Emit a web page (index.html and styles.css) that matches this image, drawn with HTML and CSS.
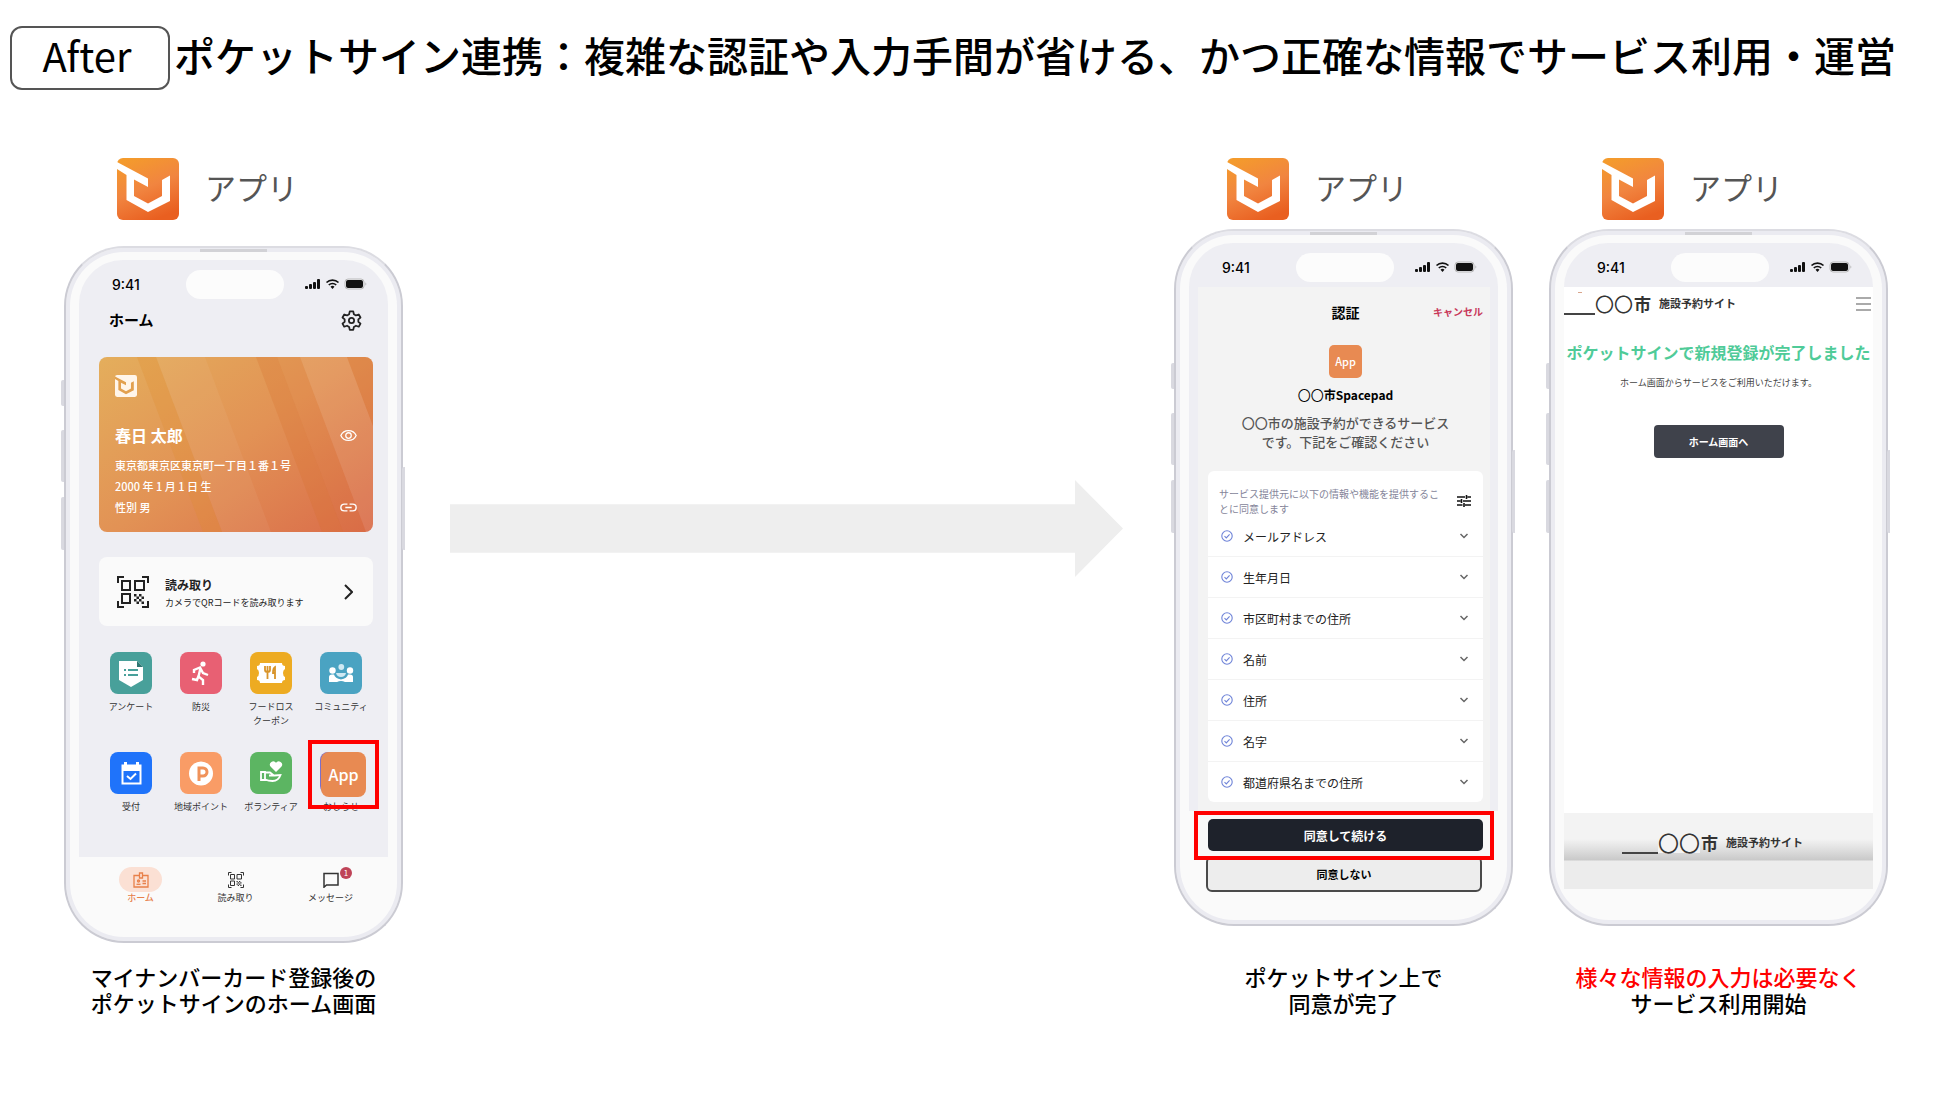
FILE: index.html
```html
<!DOCTYPE html>
<html lang="ja">
<head>
  <meta charset="UTF-8">
  <meta name="viewport" content="width=device-width, initial-scale=1.0">
  <title>ポケットサイン連携 After</title>
  <link rel="stylesheet" href="styles.css">
</head>
<body>
  <!-- shared icons -->
  <svg class="defs" aria-hidden="true">
    <defs>
      <linearGradient id="logoFill" x1="0.2" y1="0" x2="0.6" y2="1">
        <stop offset="0" stop-color="#f49b2c"/>
        <stop offset="0.5" stop-color="#f18540"/>
        <stop offset="1" stop-color="#e95f20"/>
      </linearGradient>
    </defs>
    <symbol id="mark" viewBox="0 0 62 62">
      <path d="M0 4L31 20.5V29L17 21.5V38L31 45.5L45 38V22L53 17.5V43L31 54L9.5 42V17L0 11Z"/>
    </symbol>
    <symbol id="signal" viewBox="0 0 62 12">
      <g fill="#111">
        <rect x="0" y="8" width="3" height="3" rx="1"/>
        <rect x="4" y="6" width="3" height="5" rx="1"/>
        <rect x="8" y="4" width="3" height="7" rx="1"/>
        <rect x="12" y="1" width="3" height="10" rx="1"/>
        <rect x="41" y="2" width="17" height="8" rx="2"/>
        <path d="M60.500 4.500v3c1-.5 1-2.500 0-3z" fill="#aaa"/>
        <path d="M27.500 11l-2-2.300a3 3 0 0 1 4 0z"/>
      </g>
      <rect x="40" y="1" width="19" height="10" rx="3" fill="none" stroke="#bbb"/>
      <path d="M21.500 4.500a8.600 8.600 0 0 1 12 0M23.800 7a5.300 5.300 0 0 1 7.400 0" fill="none" stroke="#111" stroke-width="1.700"/>
    </symbol>
    <symbol id="qr" viewBox="0 0 32 32">
      <g fill="none" stroke="currentColor" stroke-width="2">
        <path d="M1 7V1h6M25 1h6v6M31 25v6h-6M7 31H1v-6"/>
        <path d="M5 5h8v9H5zM18 5h9v9h-9zM5 18h8v9H5z"/>
      </g>
      <path fill="currentColor" d="M17 18h2.500v2.500H17zM22 18h2.500v2.500H22zM19.500 20.500H22V23h-2.500zM24.500 20.500H27V23h-2.500zM17 23h2.500v2.500H17zM22 23h2.500v2.500H22zM19.500 25.500H22V28h-2.500zM24.500 25.500H27V28h-2.500z"/>
    </symbol>
    <symbol id="check" viewBox="0 0 12 12">
      <g fill="none" stroke="#6f84d8" stroke-width="1.100">
        <circle cx="6" cy="6" r="5.200"/>
        <path d="M3.500 6.200l1.800 1.700 3.300-3.500"/>
      </g>
    </symbol>
    <symbol id="down" viewBox="0 0 10 6">
      <path d="M1.500 1L5 4.500 8.500 1" fill="none" stroke="#666" stroke-width="1.500"/>
    </symbol>
  </svg>

  <header class="title-bar">
    <span class="badge-after">After</span>
    <h1>ポケットサイン連携：複雑な認証や入力手間が省ける、かつ正確な情報でサービス利用・運営</h1>
  </header>

  <main class="flow">
    <!-- 1: home -->
    <section class="step step-home">
      <div class="app-head">
        <svg class="logo" viewBox="0 0 62 62"><rect width="62" height="62" rx="6" fill="url(#logoFill)"/><use href="#mark" fill="#fff"/></svg>
        <span>アプリ</span>
      </div>
      <div class="phone">
        <i class="side side-a"></i><i class="side side-b"></i><i class="side side-c"></i><i class="side side-r"></i>
        <div class="screen">
          <div class="status"><span>9:41</span><i class="island"></i><svg class="signal"><use href="#signal"/></svg></div>
          <div class="home">
            <div class="home-head">
              <h2>ホーム</h2>
              <svg class="gear" viewBox="0 0 24 24" fill="none" stroke="#222" stroke-width="2" stroke-linejoin="round">
                <path d="M10 1.500h4l.7 3.300 2.400 1.400 3.200-1.100 2 3.500-2.500 2.200v2.600l2.500 2.200-2 3.500-3.200-1.100-2.400 1.400-.7 3.300h-4l-.7-3.300-2.400-1.400-3.200 1.100-2-3.500 2.500-2.200v-2.600L1.700 8.600l2-3.500 3.200 1.100 2.400-1.400z"/>
                <circle cx="12" cy="12" r="3"/>
              </svg>
            </div>
            <div class="id-card">
              <svg class="stripes" viewBox="0 0 274 175" preserveAspectRatio="none">
                <path d="M38 0h19l66 175h-19z" fill="#e08a2c" opacity=".25"/>
                <path d="M57 0h49l66 175h-49z" fill="#fff" opacity=".05"/>
                <path d="M157 0h21l66 175h-21z" fill="#d8702c" opacity=".25"/>
                <path d="M178 0h23l66 175h-23z" fill="#d8702c" opacity=".1"/>
                <path d="M201 0h47l66 175h-47z" fill="#fff" opacity=".08"/>
                <path d="M248 0h26v69z" fill="#d8702c" opacity=".25"/>
              </svg>
              <svg class="card-logo" viewBox="0 0 62 62"><rect width="62" height="62" rx="6" fill="#fff5ea"/><use href="#mark" fill="#e2a04f"/></svg>
              <div class="card-row card-name">
                <strong>春日 太郎</strong>
                <svg class="card-icon" viewBox="0 0 16 12" fill="none" stroke="#fff" stroke-width="1.200"><path d="M.8 6C3.500-.2 12.500-.2 15.200 6 12.500 12.200 3.500 12.200.8 6z"/><circle cx="8" cy="6" r="2.600"/></svg>
              </div>
              <p>東京都東京区東京町一丁目１番１号</p>
              <p>2000 年 1 月 1 日 生</p>
              <div class="card-row">
                <p>性別 男</p>
                <svg class="card-icon" viewBox="0 0 16 12" fill="none" stroke="#fff" stroke-width="1.300"><path d="M7 2.800H4a3.200 3.200 0 0 0 0 6.400h3M9 2.800h3a3.200 3.200 0 0 1 0 6.400H9M5 6h6"/></svg>
              </div>
            </div>
            <button class="scan">
              <svg class="scan-qr"><use href="#qr"/></svg>
              <span class="scan-text"><b>読み取り</b><small>カメラでQRコードを読み取ります</small></span>
              <svg class="scan-next" viewBox="0 0 9 16"><path d="M1 1l7 7-7 7" fill="none" stroke="#222" stroke-width="2"/></svg>
            </button>
            <ul class="apps">
              <li><a href="#">
                <svg class="app-icon teal" viewBox="0 0 42 42"><path fill="#fff" d="M9 9h18l6 6v13l-12 7-12-7z"/><path fill="#2c7672" d="M27 9v6h6z"/><path stroke="#48a09a" stroke-width="2" d="M14 18h2M18 18h10M14 23h2M18 23h10"/></svg>
                <span>アンケート</span></a></li>
              <li><a href="#">
                <svg class="app-icon pink" viewBox="0 0 42 42"><circle cx="23" cy="12" r="2.600" fill="#fff"/><path d="M14 21v-3l6-2.500 3 5.500 5 2M20.500 16l-2 8.500 4.500 3.500v5M18.500 24l-1.500 4-5-1" fill="none" stroke="#fff" stroke-width="2.400"/></svg>
                <span>防災</span></a></li>
              <li><a href="#">
                <svg class="app-icon yellow" viewBox="0 0 42 42"><path fill="#fff" d="M10 11h22q0 3 3 3v3q-2 1-2 4t2 4v3q-3 0-3 3H10q0-3-3-3v-3q2-1 2-4t-2-4v-3q3 0 3-3z"/><path d="M15 14v4q0 2 2.500 2T20 18v-4M17.500 14v13M25 27V15q-2 1-2 6h2" fill="none" stroke="#d8942a" stroke-width="1.800"/></svg>
                <span>フードロス<br>クーポン</span></a></li>
              <li><a href="#">
                <svg class="app-icon blue" viewBox="0 0 42 42"><g fill="#fff"><circle cx="12.500" cy="18.500" r="3.200"/><circle cx="30" cy="18.500" r="3.200"/><path d="M9 30v-5q0-2.500 3-2.500h2q1 4 7 5 6-1 7-5h2q3 0 3 2.500v5h-8q-4-2-8 0z"/></g><g fill="#cfe9f3"><circle cx="21.300" cy="15" r="2.900"/><path d="M16 21h10q-1 4-5 4t-5-4z"/></g></svg>
                <span>コミュニティ</span></a></li>
              <li><a href="#">
                <svg class="app-icon royal" viewBox="0 0 42 42"><path d="M12.500 13.500h18v18h-18z" fill="none" stroke="#fff" stroke-width="2"/><path fill="#fff" d="M12 13h19v6H12zM14 10h3v4h-3zM26 10h3v4h-3z"/><path d="M17 24l3.500 3 5.500-5.500" fill="none" stroke="#fff" stroke-width="2"/></svg>
                <span>受付</span></a></li>
              <li><a href="#">
                <svg class="app-icon peach" viewBox="0 0 42 42"><circle cx="21" cy="21.500" r="12" fill="#fff"/><path d="M19 29V16h4a3.500 3.500 0 0 1 0 8h-4" fill="none" stroke="#f0925a" stroke-width="3"/></svg>
                <span>地域ポイント</span></a></li>
              <li><a href="#">
                <svg class="app-icon green" viewBox="0 0 42 42"><path fill="#fff" d="M26 20l-5.500-5.500a3.300 3.300 0 0 1 5.500-3.700 3.300 3.300 0 0 1 5.500 3.700z"/><path d="M11 20h4v8h-4zM15 20.500h5l4 3h-5 5.500l6-.5q-2 6-8 6-4 0-7.500-1.500" fill="none" stroke="#fff" stroke-width="1.800"/></svg>
                <span>ボランティア</span></a></li>
              <li><a href="#">
                <i class="app-icon oshirase"></i>
                <span>おしらせ</span></a>
                <b class="app-tile app-over">App</b>
                <i class="focus-app"></i></li>
            </ul>
          </div>
          <nav class="tabs">
            <a href="#" class="active">
              <span class="tab-icon"><svg viewBox="0 0 16 16" fill="none" stroke="currentColor" stroke-width="1.300"><path d="M6 3.500H1v11.500h14V3.500h-5M6.500 1h3v5h-3zM9.500 9h3.500M9.500 11.500h3.500"/><circle cx="5.500" cy="9" r="1"/><path d="M3.500 12.300h4"/></svg></span>
              ホーム
            </a>
            <a href="#">
              <span class="tab-icon"><svg><use href="#qr"/></svg></span>
              読み取り
            </a>
            <a href="#">
              <span class="tab-icon"><svg viewBox="0 0 16 16" fill="none" stroke="currentColor" stroke-width="1.500"><path d="M1 1.500h14v11.500H3.500L1 15.200z"/></svg><em>1</em></span>
              メッセージ
            </a>
          </nav>
        </div>
      </div>
      <p class="caption">マイナンバーカード登録後の<br>ポケットサインのホーム画面</p>
    </section>

    <div class="arrow"></div>

    <!-- 2: consent -->
    <section class="step">
      <div class="app-head">
        <svg class="logo" viewBox="0 0 62 62"><rect width="62" height="62" rx="6" fill="url(#logoFill)"/><use href="#mark" fill="#fff"/></svg>
        <span>アプリ</span>
      </div>
      <div class="phone">
        <i class="side side-a"></i><i class="side side-b"></i><i class="side side-c"></i><i class="side side-r"></i>
        <div class="screen">
          <div class="status"><span>9:41</span><i class="island"></i><svg class="signal"><use href="#signal"/></svg></div>
          <div class="consent">
            <div class="consent-head">
              <h2>認証</h2>
              <a href="#">キャンセル</a>
            </div>
            <b class="app-tile app-small">App</b>
            <h3><span>〇〇</span>市Spacepad</h3>
            <p class="desc">〇〇市の施設予約ができるサービス<br>です。下記をご確認ください</p>
            <div class="scope">
              <div class="scope-head">
                <p>サービス提供元に以下の情報や機能を提供するこ<wbr>とに同意します</p>
                <svg class="tune" viewBox="0 0 14 12" stroke="#111" stroke-width="1.600"><path d="M0 2h8M10.500 2H14M9.500 0v4M0 6h3.500M6 6h8M4.500 4v4M0 10h5.500M8 10h6M7 8v4"/></svg>
              </div>
              <ul>
                <li><button><svg class="ok"><use href="#check"/></svg>メールアドレス<svg class="more"><use href="#down"/></svg></button></li>
                <li><button><svg class="ok"><use href="#check"/></svg>生年月日<svg class="more"><use href="#down"/></svg></button></li>
                <li><button><svg class="ok"><use href="#check"/></svg>市区町村までの住所<svg class="more"><use href="#down"/></svg></button></li>
                <li><button><svg class="ok"><use href="#check"/></svg>名前<svg class="more"><use href="#down"/></svg></button></li>
                <li><button><svg class="ok"><use href="#check"/></svg>住所<svg class="more"><use href="#down"/></svg></button></li>
                <li><button><svg class="ok"><use href="#check"/></svg>名字<svg class="more"><use href="#down"/></svg></button></li>
                <li><button><svg class="ok"><use href="#check"/></svg>都道府県名までの住所<svg class="more"><use href="#down"/></svg></button></li>
              </ul>
            </div>
          </div>
          <div class="actions">
            <div class="focus-agree"><button class="agree">同意して続ける</button></div>
            <button class="decline">同意しない</button>
          </div>
        </div>
      </div>
      <p class="caption">ポケットサイン上で<br>同意が完了</p>
    </section>

    <!-- 3: done -->
    <section class="step step-last">
      <div class="app-head">
        <svg class="logo" viewBox="0 0 62 62"><rect width="62" height="62" rx="6" fill="url(#logoFill)"/><use href="#mark" fill="#fff"/></svg>
        <span>アプリ</span>
      </div>
      <div class="phone">
        <i class="side side-a"></i><i class="side side-b"></i><i class="side side-c"></i><i class="side side-r"></i>
        <div class="screen">
          <div class="status"><span>9:41</span><i class="island"></i><svg class="signal"><use href="#signal"/></svg></div>
          <div class="site">
            <div class="site-head">
              <div class="site-name"><i class="rule"></i><span class="rings">〇〇</span><b class="city">市</b><b>施設予約サイト</b></div>
              <button class="menu" aria-label="メニュー"><i></i><i></i><i></i></button>
            </div>
            <h2>ポケットサインで新規登録が完了しました</h2>
            <p>ホーム画面からサービスをご利用いただけます。</p>
            <button class="to-home">ホーム画面へ</button>
            <footer>
              <div class="site-name"><i class="rule"></i><span class="rings">〇〇</span><b class="city">市</b><b>施設予約サイト</b></div>
            </footer>
          </div>
        </div>
      </div>
      <p class="caption"><span class="red">様々な情報の入力は必要なく</span><br>サービス利用開始</p>
    </section>
  </main>
</body>
</html>
```

FILE: styles.css
```css
* {
  box-sizing: border-box;
}
body {
  margin: 0;
  font-family: "Noto Sans CJK JP", sans-serif;
  line-height: 1;
  color: #000;
  background: #fff;
}
h1, h2, h3, p, ul {
  margin: 0;
  padding: 0;
}
ul {
  list-style: none;
}
a {
  color: inherit;
  text-decoration: none;
}
button {
  border: none;
  padding: 0;
  font-family: inherit;
  cursor: pointer;
}
svg, i {
  display: block;
  flex: none;
}
.defs {
  position: absolute;
  width: 0;
  height: 0;
}

/* title */
.title-bar {
  display: flex;
  align-items: flex-start;
  padding: 26px 10px 0;
}
.badge-after {
  flex: none;
  width: 160px;
  height: 64px;
  padding-right: 6px;
  border: 2px solid #555;
  border-radius: 12px;
  font-size: 40px;
  line-height: 54px;
  text-align: center;
}
.title-bar h1 {
  margin-left: 4px;
  font-size: 41px;
  font-weight: 500;
  line-height: 56px;
}

/* three steps and arrow */
.flow {
  display: flex;
  padding: 68px 62px 40px 64px;
}
.step {
  display: flex;
  flex-direction: column;
  flex: none;
  width: 339px;
}
.step-last {
  margin-left: 36px;
}
.app-head {
  display: flex;
  align-items: center;
  gap: 26px;
  padding-left: 53px;
  margin-bottom: 9px;
  font-size: 31px;
  color: #555;
}
.app-head span {
  padding-bottom: 6px;
}
.step-home .app-head {
  margin-bottom: 26px;
}
.logo {
  width: 62px;
  height: 62px;
}
.arrow {
  flex: 1;
  height: 97px;
  margin: 322px 51px 0 47px;
  background: #eee;
  clip-path: polygon(0 25%, calc(100% - 48px) 25%, calc(100% - 48px) 0, 100% 50%, calc(100% - 48px) 100%, calc(100% - 48px) 75%, 0 75%);
}
.caption {
  margin-top: auto;
  padding-top: 20px;
  font-size: 22px;
  font-weight: 500;
  line-height: 26px;
  text-align: center;
  white-space: nowrap;
}
.red {
  color: #f00;
}

/* phone */
.phone {
  position: relative;
  height: 697px;
  padding: 8px 9px;
  border: 2px solid #cbcbd3;
  border-top-color: #dcdce2;
  border-radius: 60px;
  background: #fafafa;
  box-shadow: inset 0 0 0 4px #ebebf1;
}
.phone::before {
  content: "";
  position: absolute;
  top: 1px;
  left: 134px;
  width: 67px;
  height: 3px;
  background: #d2d2d6;
}
.screen {
  display: flex;
  flex-direction: column;
  height: 100%;
  margin: 4px 4px 0;
}
.side {
  position: absolute;
  left: -5px;
  width: 3px;
  border-radius: 2px 0 0 2px;
  background: #d9d9e0;
}
.side-a {
  top: 132px;
  height: 26px;
}
.side-b {
  top: 182px;
  height: 52px;
}
.side-c {
  top: 249px;
  height: 53px;
}
.side-r {
  top: 219px;
  left: auto;
  right: -4px;
  height: 83px;
}
.status {
  display: grid;
  grid-template-columns: 1fr 98px 1fr;
  align-items: center;
  height: 44px;
  padding: 4px 21px 0 23px;
  border-radius: 46px 46px 0 0;
  background: #eeeef3;
  font: 500 14px Inter, sans-serif;
}
.status span {
  padding: 1px 0 0 10px;
}
.island {
  height: 29px;
  border-radius: 15px;
  background: #fcfcfc;
}
.signal {
  width: 62px;
  height: 12px;
  justify-self: end;
}
.app-tile {
  display: block;
  background: #e88a52;
  color: #fff;
  font-weight: 500;
  text-align: center;
}

/* home screen */
.home {
  height: 553px;
  padding: 4px 15px 0 20px;
  background: #eeeef3;
}
.home-head {
  display: flex;
  align-items: center;
  justify-content: space-between;
  height: 24px;
  padding: 0 11px 0 10px;
}
.home-head h2 {
  padding-bottom: 2px;
  font-size: 15px;
}
.gear {
  width: 21px;
  height: 21px;
}
.id-card {
  position: relative;
  height: 175px;
  margin-top: 25px;
  padding: 18px 16px 0;
  border-radius: 8px;
  overflow: hidden;
  background: linear-gradient(145deg, #e4ae5c, #e29255 50%, #da6c4a);
  color: #fff;
  font-size: 11px;
  font-weight: 500;
  line-height: 21px;
}
.id-card > * {
  position: relative;
}
.id-card .stripes {
  position: absolute;
  top: 0;
  left: 0;
  width: 100%;
  height: 100%;
}
.card-logo {
  width: 22px;
  height: 22px;
}
.card-row {
  display: flex;
  align-items: center;
  justify-content: space-between;
}
.card-name {
  margin: 28px 0 9px;
  font-size: 16px;
}
.card-icon {
  width: 17px;
  height: 13px;
}
.scan {
  display: flex;
  align-items: center;
  width: 100%;
  height: 69px;
  margin-top: 25px;
  padding: 0 20px 0 18px;
  border-radius: 8px;
  background: #fafafa;
  color: #222;
  text-align: left;
}
.scan-qr {
  width: 32px;
  height: 32px;
}
.scan-text {
  display: grid;
  gap: 6px;
  flex: 1;
  margin-left: 16px;
  padding-top: 4px;
  line-height: 12px;
}
.scan-text b {
  font-size: 12px;
}
.scan-text small {
  font-size: 9px;
}
.scan-next {
  width: 9px;
  height: 16px;
}
.apps {
  display: grid;
  grid-template-columns: repeat(4, 70px);
  grid-auto-rows: 100px;
  justify-content: center;
  margin-top: 26px;
  font-size: 9px;
  line-height: 14px;
  color: #333;
  text-align: center;
  white-space: nowrap;
}
.apps li {
  position: relative;
}
.app-icon {
  width: 42px;
  height: 42px;
  margin: 0 auto 6px;
  border-radius: 8px;
}
.teal { background: #48a09a; }
.pink { background: #e86073; }
.yellow { background: #edab22; }
.blue { background: #4aa3c2; }
.royal { background: #1f73fa; }
.peach { background: #f99c66; }
.green { background: #5cb562; }
.oshirase { background: #7d6fc9; }
.app-over {
  position: absolute;
  top: 0;
  left: 15px;
  width: 45px;
  height: 45px;
  border-radius: 8px;
  font-size: 16px;
  line-height: 45px;
}
.focus-app {
  position: absolute;
  top: -12px;
  left: 2px;
  width: 71px;
  height: 69px;
  border: 4px solid #f00;
}
.tabs {
  display: grid;
  grid-template-columns: repeat(3, 1fr);
  padding: 10px 10px 0 14px;
  font-size: 9px;
  text-align: center;
  color: #333;
}
.tabs .active {
  color: #e8804a;
  font-weight: 500;
}
.tab-icon {
  position: relative;
  display: flex;
  align-items: center;
  justify-content: center;
  width: 43px;
  height: 25px;
  margin: 0 auto 1px;
  border-radius: 13px;
}
.active .tab-icon {
  background: #fbe0d4;
}
.tab-icon svg {
  width: 16px;
  height: 16px;
}
.tab-icon em {
  position: absolute;
  top: 0;
  right: 0;
  width: 12px;
  height: 12px;
  border-radius: 6px;
  background: #bf4458;
  color: #fff;
  font-style: normal;
  font-size: 8px;
  line-height: 12px;
}

/* consent screen */
.consent {
  height: 524px;
  padding: 0 7px 0 10px;
  border: solid #eeeef3;
  border-width: 0 8px 0 9px;
  background: #f3f3f3;
  text-align: center;
}
.consent-head {
  display: grid;
  grid-template-columns: 1fr auto 1fr;
  align-items: center;
  padding-top: 18px;
}
.consent-head h2 {
  grid-column: 2;
  font-size: 14px;
}
.consent-head a {
  justify-self: end;
  color: #c8385a;
  font-size: 10px;
  font-weight: 700;
}
.app-small {
  width: 33px;
  height: 33px;
  margin: 26px auto 10px;
  border-radius: 5px;
  font-size: 11px;
  line-height: 32px;
}
.consent h3 {
  font-size: 12px;
}
.consent h3 span {
  font-size: 13px;
  font-weight: 400;
}
.desc {
  margin: 12px 0 20px;
  font-size: 13px;
  font-weight: 500;
  line-height: 19px;
  color: #555;
}
.scope {
  border-radius: 6px;
  background: #fff;
}
.scope-head {
  display: flex;
  align-items: center;
  justify-content: space-between;
  height: 45px;
  padding: 14px 12px 0 11px;
  color: #85859a;
  font-size: 10px;
  line-height: 15px;
  text-align: left;
}
.scope-head p {
  width: 226px;
}
.tune {
  width: 14px;
  height: 12px;
}
.scope li + li {
  border-top: 1px solid #f3f3f3;
}
.scope li button {
  display: flex;
  align-items: center;
  width: 100%;
  height: 40px;
  padding: 0 14px 0 13px;
  background: none;
  color: #222;
  font-size: 12px;
}
.ok {
  width: 12px;
  height: 12px;
  margin-right: 10px;
}
.more {
  width: 10px;
  height: 6px;
  margin-left: auto;
}
.actions {
  margin: 0 4px 0 5px;
}
.focus-agree {
  position: relative;
  padding: 4px 7px 5px 10px;
  border: 4px solid #f00;
  background: #f8f8f8;
}
.agree {
  display: block;
  width: 100%;
  height: 32px;
  border-radius: 5px;
  background: #1e222b;
  color: #fff;
  font-size: 12px;
  font-weight: 700;
}
.decline {
  display: block;
  width: 276px;
  height: 36px;
  margin: -4px 0 0 12px;
  border: 2px solid #4a4a4a;
  border-radius: 6px;
  background: #ededed;
  font-size: 11px;
  font-weight: 700;
}

/* booking site */
.site {
  display: flex;
  flex-direction: column;
  align-items: center;
  height: 602px;
  background: #fff;
}
.site-head {
  display: flex;
  align-items: flex-start;
  justify-content: space-between;
  width: 100%;
  padding: 4px 2px 0 0;
}
.site-name {
  display: flex;
  align-items: center;
  height: 24px;
  color: #333;
  font-size: 11px;
  white-space: nowrap;
}
.rule {
  position: relative;
  align-self: flex-end;
  width: 31px;
  height: 2px;
  background: #444;
}
.site-head .rule::before {
  content: "";
  position: absolute;
  top: -21px;
  left: 14px;
  width: 4px;
  height: 1px;
  background: #d9a58c;
}
.rings {
  font-size: 19px;
}
.city {
  margin: 0 8px 0 1px;
  font-size: 17px;
}
.menu {
  display: grid;
  gap: 4px;
  width: 15px;
  padding-top: 6px;
  background: none;
}
.menu i {
  height: 2px;
  background: #aaa;
}
.site h2 {
  margin-top: 29px;
  font-size: 16px;
  line-height: 16px;
  color: #4fcb98;
  white-space: nowrap;
}
.site p {
  margin-top: 18px;
  font-size: 9px;
  line-height: 10px;
  color: #444;
}
.to-home {
  width: 130px;
  height: 33px;
  margin-top: 37px;
  border-radius: 4px;
  background: #3f424b;
  color: #fff;
  font-size: 10px;
  font-weight: 700;
}
.site footer {
  display: flex;
  justify-content: center;
  width: 100%;
  height: 76px;
  margin-top: auto;
  padding: 17px 12px 0 0;
  background: linear-gradient(#f3f3f3 26px, #e4e4e4 34px, #c9c9c9 47px, #ececec 48px);
}
footer .rule {
  width: 36px;
}
footer .rings {
  font-size: 21px;
  background: linear-gradient(#f3f3f3, #f3f3f3) center / 100% 24px no-repeat;
}
```
